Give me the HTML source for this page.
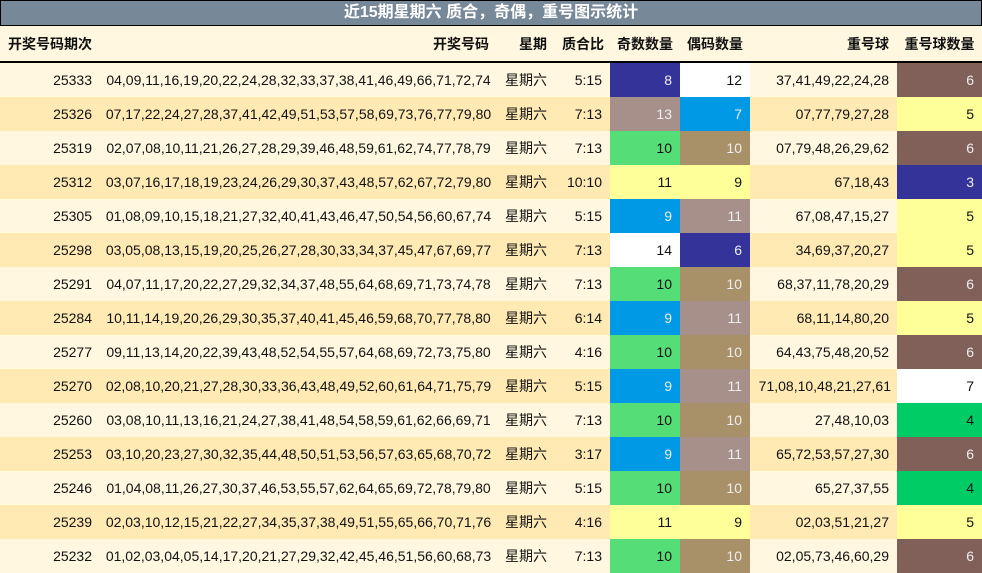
<!DOCTYPE html><html><head><meta charset="utf-8"><style>
body{margin:0;width:982px;height:573px;overflow:hidden;background:#FFF7DF;font-family:"Liberation Sans","Noto Sans CJK SC",sans-serif;font-size:14px;color:#111}
.t{position:absolute;left:0;top:0;width:980px;height:24px;background:#778899;border:1px solid #000;color:#fff;font-weight:bold;font-size:16px;text-align:center;line-height:24px}
table{position:absolute;left:0;top:26px;border-collapse:collapse;table-layout:fixed;width:982px}
td,th{padding:0 8px 0 0;text-align:right;white-space:nowrap;overflow:hidden}
th{height:35px;font-weight:bold;font-size:14px;border-bottom:2px solid #000;background:#FFF7DF}
td{height:34px}
tr.a td{background:#FFF7DF}tr.b td{background:#FFEAB4}
td.n{text-align:center;padding:0}td.w{text-align:center;padding:0}
.c1{background:#333399!important;color:#eee}.c2{background:#0099E6!important;color:#eee}.c3{background:#55DD77!important}.c4{background:#A89068!important;color:#eee}.c5{background:#FFFF99!important}.c6{background:#A69089!important;color:#eee}.c7{background:#fff!important}.c8{background:#806058!important;color:#eee}.c9{background:#00CC66!important}
</style></head><body>
<div class="t">近15期星期六 质合，奇偶，重号图示统计</div>
<table>
<colgroup><col style="width:100px"><col style="width:397px"><col style="width:58px"><col style="width:55px"><col style="width:70px"><col style="width:70px"><col style="width:147px"><col style="width:85px"></colgroup>
<tr><th style="text-align:left;padding-left:8px">开奖号码期次</th><th>开奖号码</th><th>星期</th><th style="padding-right:6px">质合比</th><th style="text-align:center;padding:0">奇数数量</th><th style="text-align:center;padding:0">偶码数量</th><th>重号球</th><th style="text-align:center;padding:0">重号球数量</th></tr>
<tr class="a"><td>25333</td><td class="n">04,09,11,16,19,20,22,24,28,32,33,37,38,41,46,49,66,71,72,74</td><td class="w">星期六</td><td>5:15</td><td class="c1">8</td><td class="c7">12</td><td>37,41,49,22,24,28</td><td class="c8">6</td></tr>
<tr class="b"><td>25326</td><td class="n">07,17,22,24,27,28,37,41,42,49,51,53,57,58,69,73,76,77,79,80</td><td class="w">星期六</td><td>7:13</td><td class="c6">13</td><td class="c2">7</td><td>07,77,79,27,28</td><td class="c5">5</td></tr>
<tr class="a"><td>25319</td><td class="n">02,07,08,10,11,21,26,27,28,29,39,46,48,59,61,62,74,77,78,79</td><td class="w">星期六</td><td>7:13</td><td class="c3">10</td><td class="c4">10</td><td>07,79,48,26,29,62</td><td class="c8">6</td></tr>
<tr class="b"><td>25312</td><td class="n">03,07,16,17,18,19,23,24,26,29,30,37,43,48,57,62,67,72,79,80</td><td class="w">星期六</td><td>10:10</td><td class="c5">11</td><td class="c5">9</td><td>67,18,43</td><td class="c1">3</td></tr>
<tr class="a"><td>25305</td><td class="n">01,08,09,10,15,18,21,27,32,40,41,43,46,47,50,54,56,60,67,74</td><td class="w">星期六</td><td>5:15</td><td class="c2">9</td><td class="c6">11</td><td>67,08,47,15,27</td><td class="c5">5</td></tr>
<tr class="b"><td>25298</td><td class="n">03,05,08,13,15,19,20,25,26,27,28,30,33,34,37,45,47,67,69,77</td><td class="w">星期六</td><td>7:13</td><td class="c7">14</td><td class="c1">6</td><td>34,69,37,20,27</td><td class="c5">5</td></tr>
<tr class="a"><td>25291</td><td class="n">04,07,11,17,20,22,27,29,32,34,37,48,55,64,68,69,71,73,74,78</td><td class="w">星期六</td><td>7:13</td><td class="c3">10</td><td class="c4">10</td><td>68,37,11,78,20,29</td><td class="c8">6</td></tr>
<tr class="b"><td>25284</td><td class="n">10,11,14,19,20,26,29,30,35,37,40,41,45,46,59,68,70,77,78,80</td><td class="w">星期六</td><td>6:14</td><td class="c2">9</td><td class="c6">11</td><td>68,11,14,80,20</td><td class="c5">5</td></tr>
<tr class="a"><td>25277</td><td class="n">09,11,13,14,20,22,39,43,48,52,54,55,57,64,68,69,72,73,75,80</td><td class="w">星期六</td><td>4:16</td><td class="c3">10</td><td class="c4">10</td><td>64,43,75,48,20,52</td><td class="c8">6</td></tr>
<tr class="b"><td>25270</td><td class="n">02,08,10,20,21,27,28,30,33,36,43,48,49,52,60,61,64,71,75,79</td><td class="w">星期六</td><td>5:15</td><td class="c2">9</td><td class="c6">11</td><td style="padding-right:6px">71,08,10,48,21,27,61</td><td class="c7">7</td></tr>
<tr class="a"><td>25260</td><td class="n">03,08,10,11,13,16,21,24,27,38,41,48,54,58,59,61,62,66,69,71</td><td class="w">星期六</td><td>7:13</td><td class="c3">10</td><td class="c4">10</td><td>27,48,10,03</td><td class="c9">4</td></tr>
<tr class="b"><td>25253</td><td class="n">03,10,20,23,27,30,32,35,44,48,50,51,53,56,57,63,65,68,70,72</td><td class="w">星期六</td><td>3:17</td><td class="c2">9</td><td class="c6">11</td><td>65,72,53,57,27,30</td><td class="c8">6</td></tr>
<tr class="a"><td>25246</td><td class="n">01,04,08,11,26,27,30,37,46,53,55,57,62,64,65,69,72,78,79,80</td><td class="w">星期六</td><td>5:15</td><td class="c3">10</td><td class="c4">10</td><td>65,27,37,55</td><td class="c9">4</td></tr>
<tr class="b"><td>25239</td><td class="n">02,03,10,12,15,21,22,27,34,35,37,38,49,51,55,65,66,70,71,76</td><td class="w">星期六</td><td>4:16</td><td class="c5">11</td><td class="c5">9</td><td>02,03,51,21,27</td><td class="c5">5</td></tr>
<tr class="a"><td>25232</td><td class="n">01,02,03,04,05,14,17,20,21,27,29,32,42,45,46,51,56,60,68,73</td><td class="w">星期六</td><td>7:13</td><td class="c3">10</td><td class="c4">10</td><td>02,05,73,46,60,29</td><td class="c8">6</td></tr>
</table>
</body></html>
